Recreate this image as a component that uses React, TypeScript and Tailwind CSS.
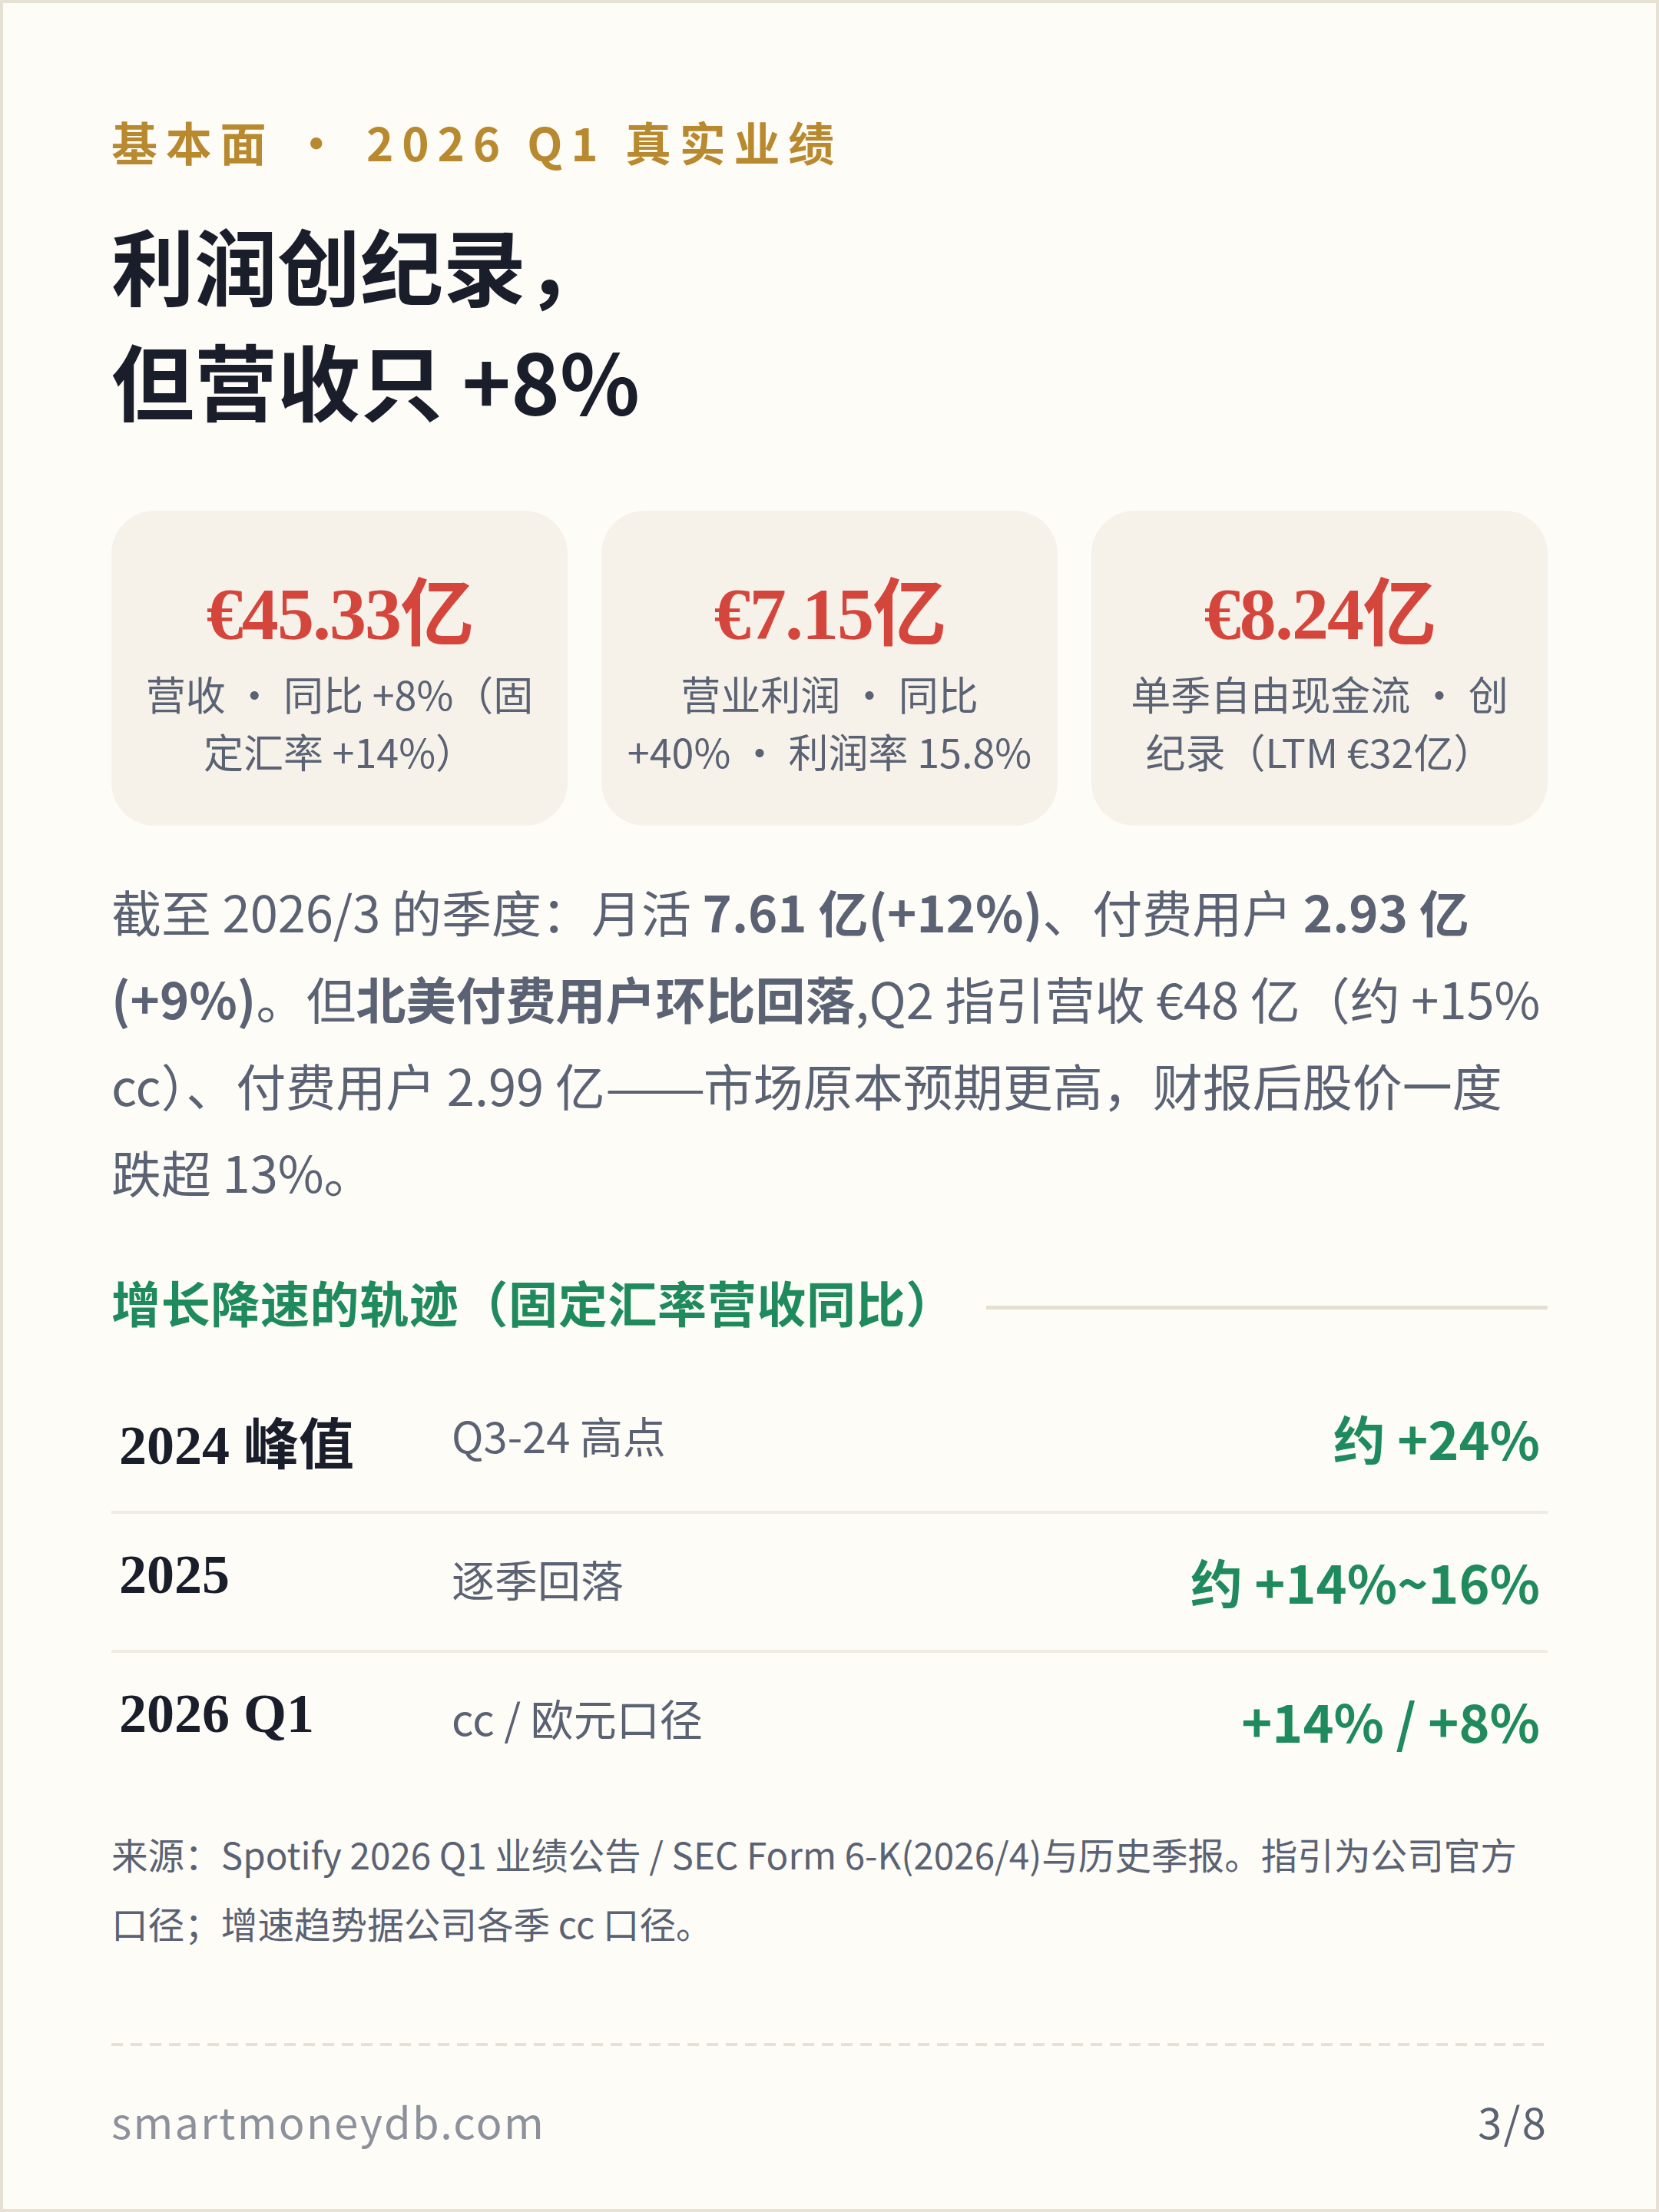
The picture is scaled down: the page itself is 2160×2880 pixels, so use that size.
const sans = "font-[family-name:'Noto_Sans_CJK_SC',sans-serif]";
const serif = "font-[family-name:'Liberation_Serif','Noto_Sans_CJK_SC',serif]";

type Stat = { value: string; lines: string[] };

const stats: Stat[] = [
  { value: "€45.33亿", lines: ["营收 · 同比 +8%（固定汇率 +14%）"] },
  { value: "€7.15亿", lines: ["营业利润 · 同比", "+40% · 利润率 15.8%"] },
  { value: "€8.24亿", lines: ["单季自由现金流 · 创纪录（LTM €32亿）"] }
];

const rows = [
  { period: "2024 峰值", note: "Q3-24 高点", value: "约 +24%" },
  { period: "2025", note: "逐季回落", value: "约 +14%~16%" },
  { period: "2026 Q1", note: "cc / 欧元口径", value: "+14% / +8%" }
];

function StatCard({ stat }: { stat: Stat }) {
  return (
    <div className="flex flex-col items-center rounded-[56px] bg-[#f6f2ea] px-[30px] pt-[80px] pb-[60px] text-center">
      <div className={`${serif} text-[96px] leading-[110px] font-bold tracking-[-0.02em] text-[#d4453c]`}>
        {stat.value}
      </div>
      <div className="mt-[10px] text-[52px] leading-[75px] text-[#5a6273]">
        {stat.lines.map((l) => (
          <div key={l}>{l}</div>
        ))}
      </div>
    </div>
  );
}

export default function App() {
  return (
    <div
      className={`${sans} flex h-[2880px] w-[2160px] flex-col border-4 border-[#e6e1d3] bg-[#fdfcf7] px-[141px] pt-[144px]`}
    >
      <div className="text-[60px] leading-[72px] font-bold tracking-[0.18em] text-[#b8892e]">
        基本面 · 2026 Q1 真实业绩
      </div>

      <h1 className="mt-[48px] text-[108px] leading-[150px] font-bold text-[#1a1e2b]">
        利润创纪录，
        <br />
        但营收只 +8%
      </h1>

      <div className="mt-[97px] grid grid-cols-3 gap-[44px]">
        {stats.map((s) => (
          <StatCard key={s.value} stat={s} />
        ))}
      </div>

      <p className="mt-[55px] text-[65px] leading-[113px] text-[#5a6273]">
        截至 2026/3 的季度：月活 <strong className="font-bold">7.61 亿(+12%)</strong>、付费用户{" "}
        <strong className="font-bold">2.93 亿(+9%)</strong>。但
        <strong className="font-bold">北美付费用户环比回落</strong>,Q2 指引营收 €48 亿（约 +15%
        cc）、付费用户 2.99 亿
        <span className="inline-block w-[128px] origin-left scale-x-[1.2]">——</span>
        市场原本预期更高，财报后股价一度
        <br />
        跌超 13%。
      </p>

      <div className="mt-[72px] flex items-center gap-[40px]">
        <h2 className="text-[64px] leading-[80px] font-bold tracking-[0.01em] text-[#1f8a5e]">
          增长降速的轨迹（固定汇率营收同比）
        </h2>
        <div className="mt-[16px] h-[5px] flex-1 bg-[#e4dfd1]" />
      </div>

      <div className="mt-[50px] flex flex-col">
        {rows.map((r, i) => (
          <div
            key={r.period}
            className={
              i < rows.length - 1
                ? "grid grid-cols-[433px_1fr_auto] border-b-4 border-[#efece3] px-[10px] pt-[38px] pb-[40px]"
                : "grid grid-cols-[433px_1fr_auto] px-[10px] pt-[38px] pb-[40px]"
            }
          >
            <div className={`${serif} text-[72px] leading-[normal] font-bold text-[#1a1e2b]`}>{r.period}</div>
            <div className="pt-[5px] text-[56px] leading-[normal] text-[#5a6273]">{r.note}</div>
            <div className="text-right text-[68px] leading-[normal] font-bold text-[#1f8a5e]">{r.value}</div>
          </div>
        ))}
      </div>

      <p className="mt-[40px] text-[47.6px] leading-[90px] text-[#5a6273]">
        来源：Spotify 2026 Q1 业绩公告 / SEC Form 6-K(2026/4)与历史季报。指引为公司官方口径；增速趋势据公司各季 cc 口径。
      </p>

      <div className="mt-auto h-[4px] bg-[repeating-linear-gradient(90deg,#e6e1d4_0px,#e6e1d4_15px,transparent_15px,transparent_25px)]" />

      <div className="mt-[56px] mb-[75px] flex items-baseline justify-between text-[56px] leading-[normal] tracking-[0.04em]">
        <span className="text-[#8c919b]">smartmoneydb.com</span>
        <span className="text-[#5a6273]">3/8</span>
      </div>
    </div>
  );
}
